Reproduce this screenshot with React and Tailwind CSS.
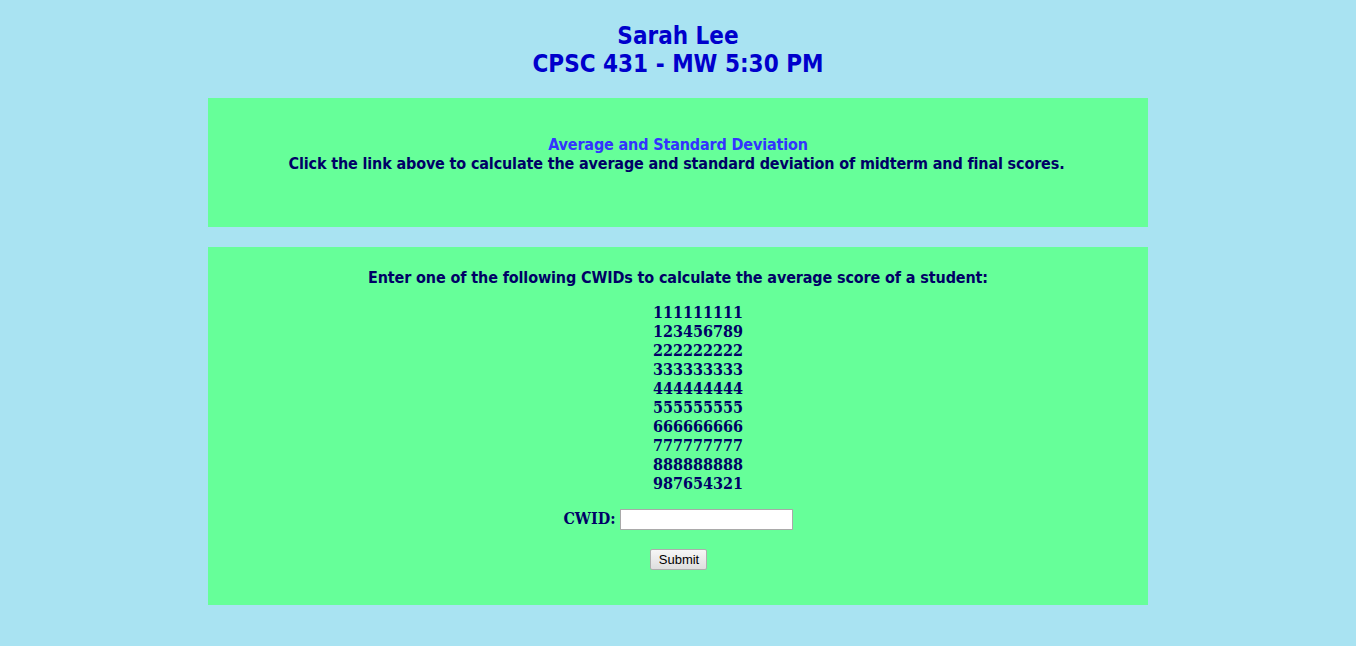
export default function App() {
  const cwids = [
    '111111111',
    '123456789',
    '222222222',
    '333333333',
    '444444444',
    '555555555',
    '666666666',
    '777777777',
    '888888888',
    '987654321',
  ];

  return (
    <div className="min-h-screen bg-[#a9e3f2] pt-[22px] font-['DejaVu_Sans',sans-serif]">
      <h1 className="text-center font-['DejaVu_Sans_Condensed',sans-serif] text-[24px] font-bold leading-[28px] text-[#0000cc]">
        Sarah Lee
        <br />
        CPSC 431 - MW 5:30 PM
      </h1>

      <div className="mx-auto mt-[20px] flex h-[129px] w-[940px] flex-col items-center bg-[#66ff99] pt-[37px] font-['DejaVu_Sans_Condensed',sans-serif] text-[16px] font-bold leading-[19px] tracking-[-0.15px] text-[#000066]">
        <a href="#" className="text-[#3333ff]">
          Average and Standard Deviation
        </a>
        <p className="pr-[3px]">Click the link above to calculate the average and standard deviation of midterm and final scores.</p>
      </div>

      <div className="mx-auto mt-[20px] flex h-[358px] w-[940px] flex-col items-center bg-[#66ff99] pt-[21px] text-[#000066]">
        <p className="font-['DejaVu_Sans_Condensed',sans-serif] text-[16px] font-bold leading-[19px] tracking-[-0.13px]">
          Enter one of the following CWIDs to calculate the average score of a student:
        </p>
        <ul className="mt-[16px] flex flex-col items-center pl-[40px] font-['DejaVu_Serif_Condensed','DejaVu_Serif',serif] text-[16px] font-bold leading-[19px]">
          {cwids.map((id) => (
            <li key={id}>{id}</li>
          ))}
        </ul>
        <form className="mt-[14px] flex flex-col items-center" onSubmit={(e) => e.preventDefault()}>
          <label className="flex items-center gap-[4px] font-['DejaVu_Serif_Condensed','DejaVu_Serif',serif] text-[16px] font-bold">
            CWID:
            <input type="text" className="h-[21px] w-[173px] border border-[#a9a9a9] bg-white" />
          </label>
          <button
            type="submit"
            className="ml-[2px] mt-[18px] h-[21px] w-[57px] rounded-[2px] border border-[#adadad] bg-gradient-to-b from-[#f6f6f6] to-[#dedede] font-['Liberation_Sans',sans-serif] text-[13px] text-black"
          >
            Submit
          </button>
        </form>
      </div>
    </div>
  );
}
